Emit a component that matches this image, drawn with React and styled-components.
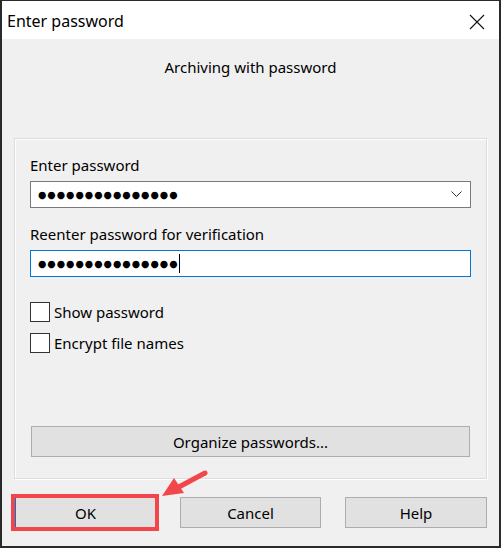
import React from "react";
import styled, {createGlobalStyle} from "styled-components";

const Global = createGlobalStyle`
  html, body {
    margin: 0;
    padding: 0;
    background: #ffffff;
  }
  * {
    box-sizing: border-box;
  }
`

const Window = styled.div`
  position: relative;
  width: 501px;
  height: 548px;
  display: flex;
  flex-direction: column;
  border: 1px solid #2a2a2a;
  border-left-width: 2px;
  border-right-width: 2px;
  border-bottom-width: 2px;
  background: #f0f0f0;
  font-family: "Noto Sans", "Liberation Sans", sans-serif;
  color: #000;
`

const TitleBar = styled.div`
  height: 38px;
  flex: none;
  display: flex;
  align-items: center;
  justify-content: space-between;
  padding: 0 14px 0 5px;
  background: #ffffff;
`

const Title = styled.span`
  font-size: 16px;
  margin-top: 2px;
`

const CloseIcon = styled.svg`
  width: 16px;
  height: 16px;
  margin-top: 4px;
`

const Body = styled.div`
  flex: 1;
  display: flex;
  flex-direction: column;
  padding: 0 12px 0 12px;
`

const Heading = styled.div`
  text-align: center;
  font-size: 15px;
  margin-top: 18px;
  height: 81px;
`

const GroupBox = styled.div`
  height: 341px;
  border: 1px solid #dcdcdc;
  box-shadow: inset 1px 1px 0 #ffffff, 1px 1px 0 #ffffff;
  padding: 16px 15px 0 15px;
  display: flex;
  flex-direction: column;
`

const Label = styled.div`
  font-size: 15px;
  line-height: 20px;
  margin-bottom: 6px;
`

const Field = styled.div`
  height: 27px;
  display: flex;
  align-items: center;
  padding: 0 8px 0 7px;
  background: #ffffff;
  border: 1px solid ${p => (p.focused ? "#0078d7" : "#7a7a7a")};
  margin-bottom: ${p => p.gap}px;
`

const Dots = styled.span`
  font-family: "DejaVu Sans", sans-serif;
  font-size: 9.6px;
  letter-spacing: 1px;
  line-height: 1;
  margin-top: 1px;
`

const Caret = styled.span`
  width: 1px;
  height: 19px;
  background: #000;
  margin-left: 0px;
`

const Chevron = styled.svg`
  width: 11px;
  height: 7px;
  margin-left: auto;
`

const CheckRow = styled.label`
  display: flex;
  align-items: center;
  gap: 4px;
  font-size: 15px;
  height: 20px;
  margin-bottom: ${p => p.gap}px;
`

const Box = styled.span`
  width: 20px;
  height: 20px;
  border: 1px solid #333;
  background: #ffffff;
  flex: none;
`

const Spacer = styled.div`
  flex: 1;
`

const Button = styled.button`
  height: 31px;
  font-family: inherit;
  font-size: 15px;
  color: #000;
  background: #e1e1e1;
  border: 1px solid ${p => (p.primary ? "#0078d7" : "#adadad")};
  padding: 0;
  width: ${p => p.width || "100%"};
`

const WideButton = styled(Button)`
  margin-bottom: 21px;
  margin-left: 1px;
`

const ButtonRow = styled.div`
  display: flex;
  justify-content: space-between;
  margin-top: 18px;
  padding: 0 0 0 1px;
`

const Highlight = styled.div`
  position: relative;
  &::after {
    content: "";
    position: absolute;
    left: -4px;
    top: -3px;
    right: -3px;
    bottom: -3px;
    border: 4px solid #f2464a;
    pointer-events: none;
  }
`

const Arrow = styled.svg`
  position: absolute;
  left: 155px;
  top: 465px;
  width: 60px;
  height: 36px;
  overflow: visible;
`

export default function App() {
	const dots = "●".repeat(15);
	return (
		<>
			<Global/>
			<Window>
				<TitleBar>
					<Title>Enter password</Title>
					<CloseIcon viewBox="0 0 16 16">
						<path d="M1 1 L15 15 M15 1 L1 15" stroke="#111" strokeWidth="1.1" fill="none"/>
					</CloseIcon>
				</TitleBar>
				<Body>
					<Heading>Archiving with password</Heading>
					<GroupBox>
						<Label>Enter password</Label>
						<Field gap={16}>
							<Dots>{dots}</Dots>
							<Chevron viewBox="0 0 11 7">
								<path d="M0.5 0.5 L5.5 5.5 L10.5 0.5" stroke="#333" strokeWidth="1" fill="none"/>
							</Chevron>
						</Field>
						<Label>Reenter password for verification</Label>
						<Field focused gap={25}>
							<Dots>{dots}</Dots>
							<Caret/>
						</Field>
						<CheckRow gap={11}>
							<Box/>
							Show password
						</CheckRow>
						<CheckRow gap={0}>
							<Box/>
							Encrypt file names
						</CheckRow>
						<Spacer/>
						<WideButton width="439px">Organize passwords...</WideButton>
					</GroupBox>
					<ButtonRow>
						<Highlight>
							<Button primary width="141px">OK</Button>
						</Highlight>
						<Button width="141px">Cancel</Button>
						<Button width="142px">Help</Button>
					</ButtonRow>
				</Body>
				<Arrow viewBox="0 0 60 36">
					<path d="M48 7 L20 22" stroke="#f2464a" strokeWidth="5" strokeLinecap="round"/>
					<polygon points="5,30 17,12 27,27" fill="#f2464a"/>
				</Arrow>
			</Window>
		</>
	);
}
